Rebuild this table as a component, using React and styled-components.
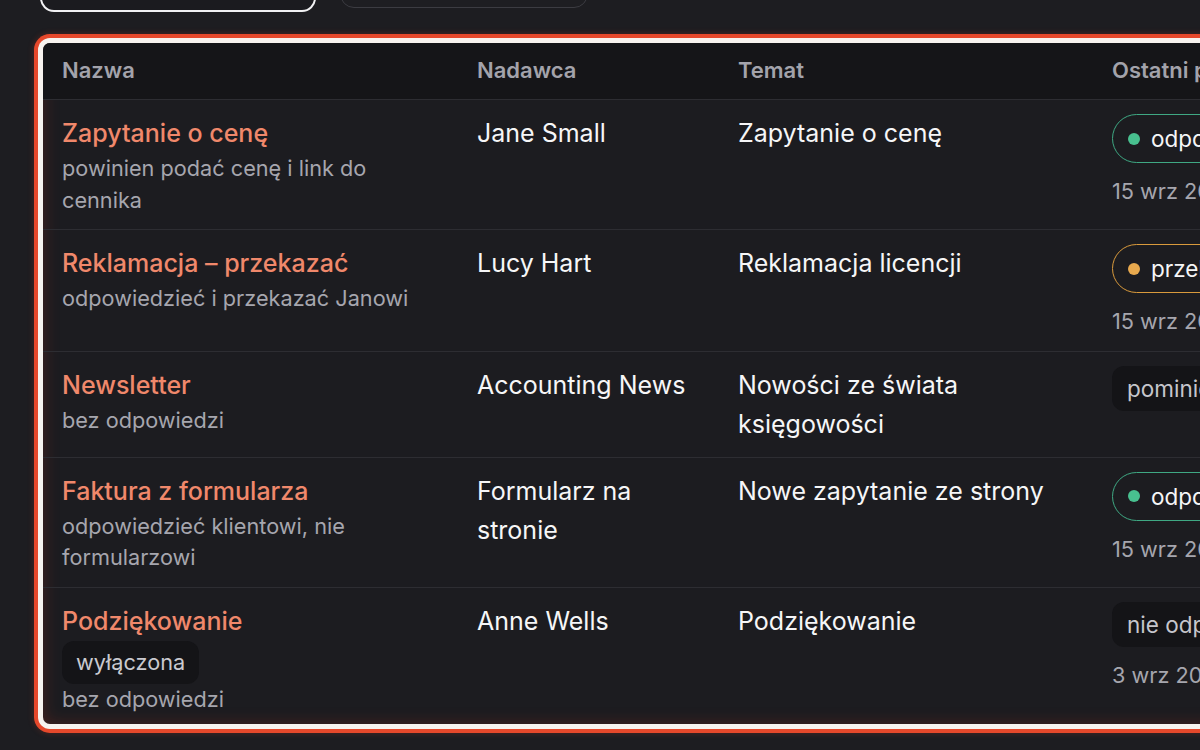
import React from "react";
import styled, { createGlobalStyle, css } from "styled-components";

const Global = createGlobalStyle`
  html, body {
    margin: 0;
    padding: 0;
    background: #1d1d21;
    overflow: hidden;
    font-family: Inter, "Noto Sans", sans-serif;
  }
  #root { width: 1200px; height: 750px; overflow: hidden; }
`;

const Page = styled.div`
  width: 1200px;
  height: 750px;
  overflow: hidden;
`;

const Toolbar = styled.div`
  display: flex;
  align-items: flex-start;
  gap: 24px;
  padding-left: 40px;
  margin-top: -40px;
`;

const ToolButton = styled.div`
  box-sizing: border-box;
  height: ${(p) => (p.$active ? 52 : 48)}px;
  width: ${(p) => p.$w}px;
  border-radius: 14px;
  border: ${(p) => (p.$active ? "2px solid #f1f1f3" : "1.5px solid #3c3c42")};
  background: ${(p) => (p.$active ? "#1b1b1f" : "#1e1e22")};
`;

const Card = styled.div`
  margin: 31px 0 0 43px;
  width: 1320px;
  height: 681px;
  background: #1c1c20;
  border-radius: 7px;
  box-shadow: 0 0 0 5px #f7f3ef, 0 0 0 9px #e6482b, 0 0 6px 9px rgba(228, 72, 44, 0.25),
    inset 0 0 16px rgba(190, 50, 30, 0.28);
  overflow: hidden;
`;

const Row = styled.div`
  display: grid;
  grid-template-columns: 415px 261px 374px 1fr;
  border-bottom: 1px solid #2d2d32;
  ${(p) =>
    p.$head &&
    css`
      background: #151518;
      height: 56px;
      align-items: center;
    `}
  &:last-child { border-bottom: none; }
`;

const HeadCell = styled.div`
  padding: 0 19px 2px;
  font-size: 22px;
  font-weight: 600;
  color: #a3a3ab;
  white-space: nowrap;
`;

const Cell = styled.div`
  padding: 14px 19px 13px;
  display: flex;
  flex-direction: column;
  align-items: flex-start;
  gap: ${(p) => p.$gap || 0}px;
  min-width: 0;
`;

const Title = styled.div`
  font-size: 25px;
  line-height: 39px;
  font-weight: 500;
  color: #f0886b;
`;

const Sub = styled.div`
  font-size: 21.7px;
  line-height: 31.5px;
  color: #a6a6ae;
`;

const Plain = styled.div`
  font-size: 25px;
  line-height: 39px;
  color: #f6f6f7;
`;

const Tag = styled.div`
  box-sizing: border-box;
  height: 43px;
  padding: 0 14px;
  display: flex;
  align-items: center;
  background: #141417;
  border-radius: 12px;
  font-size: 21.7px;
  color: #cacad0;
`;

const statusColors = {
  green: { border: "#3fa883", dot: "#48c08f" },
  orange: { border: "#d99a3c", dot: "#e8a94e" },
};

const Status = styled.div`
  box-sizing: border-box;
  display: flex;
  align-items: center;
  white-space: nowrap;
  ${(p) =>
    p.$tone === "gray"
      ? css`
          height: 45px;
          padding: 0 15px;
          border-radius: 12px;
          background: #141417;
          color: #c6c6cc;
          font-size: 22.5px;
        `
      : css`
          height: 49px;
          padding: 0 18px 0 15px;
          border-radius: 999px;
          border: 1.5px solid ${statusColors[p.$tone].border};
          color: #f6f6f7;
          font-size: 22.5px;
          gap: 11px;
        `}
`;

const Dot = styled.span`
  width: 12px;
  height: 12px;
  border-radius: 50%;
  background: ${(p) => statusColors[p.$tone].dot};
  flex: none;
`;

const DateText = styled.div`
  font-size: 21.7px;
  line-height: 31.5px;
  color: #a6a6ae;
  white-space: nowrap;
`;

const rows = [
  {
    name: "Zapytanie o cenę",
    tag: null,
    sub: "powinien podać cenę i link do cennika",
    sender: "Jane Small",
    subject: "Zapytanie o cenę",
    status: { tone: "green", label: "odpowiedziano" },
    date: "15 wrz 2025, 10:42",
  },
  {
    name: "Reklamacja – przekazać",
    sub: "odpowiedzieć i przekazać Janowi",
    sender: "Lucy Hart",
    subject: "Reklamacja licencji",
    status: { tone: "orange", label: "przekazano" },
    date: "15 wrz 2025, 09:18",
  },
  {
    name: "Newsletter",
    sub: "bez odpowiedzi",
    sender: "Accounting News",
    subject: "Nowości ze świata księgowości",
    status: { tone: "gray", label: "pominięte" },
    date: null,
  },
  {
    name: "Faktura z formularza",
    sub: "odpowiedzieć klientowi, nie formularzowi",
    sender: "Formularz na stronie",
    subject: "Nowe zapytanie ze strony",
    status: { tone: "green", label: "odpowiedziano" },
    date: "15 wrz 2025, 08:05",
  },
  {
    name: "Podziękowanie",
    tag: "wyłączona",
    sub: "bez odpowiedzi",
    sender: "Anne Wells",
    subject: "Podziękowanie",
    status: { tone: "gray", label: "nie odpowiedziano" },
    date: "3 wrz 2025, 14:30",
  },
];

export default function App() {
  return (
    <Page>
      <Global />
      <Toolbar>
        <ToolButton $active $w={276} />
        <ToolButton $w={248} />
      </Toolbar>
      <Card>
        <Row $head>
          <HeadCell>Nazwa</HeadCell>
          <HeadCell>Nadawca</HeadCell>
          <HeadCell>Temat</HeadCell>
          <HeadCell>Ostatni przebieg</HeadCell>
        </Row>
        {rows.map((r) => (
          <Row key={r.name}>
            <Cell>
              <Title>{r.name}</Title>
              {r.tag && <Tag>{r.tag}</Tag>}
              <Sub>{r.sub}</Sub>
            </Cell>
            <Cell>
              <Plain>{r.sender}</Plain>
            </Cell>
            <Cell>
              <Plain>{r.subject}</Plain>
            </Cell>
            <Cell $gap={13}>
              <Status $tone={r.status.tone}>
                {r.status.tone !== "gray" && <Dot $tone={r.status.tone} />}
                {r.status.label}
              </Status>
              {r.date && <DateText>{r.date}</DateText>}
            </Cell>
          </Row>
        ))}
      </Card>
    </Page>
  );
}
